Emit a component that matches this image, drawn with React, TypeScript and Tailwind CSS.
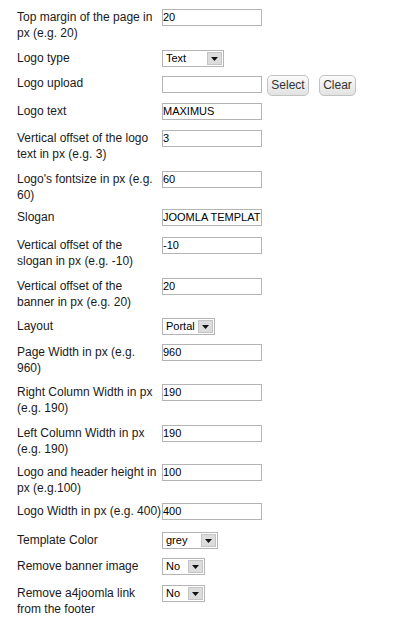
import React from "react";

type Row = {
  lines: string[];
  h: string;
  kind: "input" | "select" | "upload";
  value?: string;
  w?: string;
};

const rows: Row[] = [
  { lines: ["Top margin of the page in", "px (e.g. 20)"], h: "h-[41px]", kind: "input", value: "20" },
  { lines: ["Logo type"], h: "h-[25px]", kind: "select", value: "Text", w: "w-[62px]" },
  { lines: ["Logo upload"], h: "h-[28px]", kind: "upload" },
  { lines: ["Logo text"], h: "h-[27px]", kind: "input", value: "MAXIMUS" },
  { lines: ["Vertical offset of the logo", "text in px (e.g. 3)"], h: "h-[41px]", kind: "input", value: "3" },
  { lines: ["Logo's fontsize in px (e.g.", "60)"], h: "h-[38px]", kind: "input", value: "60" },
  { lines: ["Slogan"], h: "h-[28px]", kind: "input", value: "JOOMLA TEMPLATE" },
  { lines: ["Vertical offset of the", "slogan in px (e.g. -10)"], h: "h-[41px]", kind: "input", value: "-10" },
  { lines: ["Vertical offset of the", "banner in px (e.g. 20)"], h: "h-[40px]", kind: "input", value: "20" },
  { lines: ["Layout"], h: "h-[26px]", kind: "select", value: "Portal", w: "w-[53px]" },
  { lines: ["Page Width in px (e.g.", "960)"], h: "h-[40px]", kind: "input", value: "960" },
  { lines: ["Right Column Width in px", "(e.g. 190)"], h: "h-[41px]", kind: "input", value: "190" },
  { lines: ["Left Column Width in px", "(e.g. 190)"], h: "h-[39px]", kind: "input", value: "190" },
  { lines: ["Logo and header height in", "px (e.g.100)"], h: "h-[39px]", kind: "input", value: "100" },
  { lines: ["Logo Width in px (e.g. 400)"], h: "h-[29px]", kind: "input", value: "400" },
  { lines: ["Template Color"], h: "h-[26px]", kind: "select", value: "grey", w: "w-[56px]" },
  { lines: ["Remove banner image"], h: "h-[27px]", kind: "select", value: "No", w: "w-[43px]" },
  { lines: ["Remove a4joomla link", "from the footer"], h: "h-[40px]", kind: "select", value: "No", w: "w-[43px]" },
];

function TextBox({ value }: { value?: string }) {
  return (
    <div className="w-[100px] h-[17px] shrink-0 border border-[#b4b4b4] bg-white overflow-hidden whitespace-nowrap text-[11px] leading-[15px] text-black">
      {value}
    </div>
  );
}

function SelectBox({ value, w }: { value?: string; w?: string }) {
  return (
    <div className={`${w} h-[17px] shrink-0 border border-[#b4b4b4] bg-white flex items-stretch p-[1px]`}>
      <span className="flex-1 pl-[2px] text-[11px] leading-[13px] text-black overflow-hidden whitespace-nowrap">
        {value}
      </span>
      <span className="w-[15px] bg-[#dcdcdc] border border-[#c4c4c4] flex items-center justify-center">
        <svg width="7" height="4" viewBox="0 0 7 4">
          <path d="M0 0h7L3.5 4z" fill="#111" />
        </svg>
      </span>
    </div>
  );
}

function Btn({ children, w }: { children: React.ReactNode; w: string }) {
  return (
    <button
      className={`${w} h-[21px] rounded-[5px] border border-[#c2c2c2] bg-linear-to-b from-[#fbfbfb] to-[#e2e2e2] text-[12px] text-[#333] leading-none`}
    >
      {children}
    </button>
  );
}

export default function App() {
  return (
    <div className="w-[412px] min-h-[625px] bg-white pt-[9px] pl-[17px] font-['Liberation_Sans',Arial,sans-serif]">
      {rows.map((row) => (
        <div key={row.lines[0]} className={`flex items-start ${row.h}`}>
          <div className="w-[145px] shrink-0 text-[12px] leading-[16px] text-[#1a1a1a] whitespace-nowrap">
            {row.lines.map((l) => (
              <div key={l}>{l}</div>
            ))}
          </div>
          {row.kind === "input" && <TextBox value={row.value} />}
          {row.kind === "select" && <SelectBox value={row.value} w={row.w} />}
          {row.kind === "upload" && (
            <div className="flex items-center -mt-[3px]">
              <TextBox />
              <div className="ml-[5px]">
                <Btn w="w-[42px]">Select</Btn>
              </div>
              <div className="ml-[10px]">
                <Btn w="w-[37px]">Clear</Btn>
              </div>
            </div>
          )}
        </div>
      ))}
    </div>
  );
}
